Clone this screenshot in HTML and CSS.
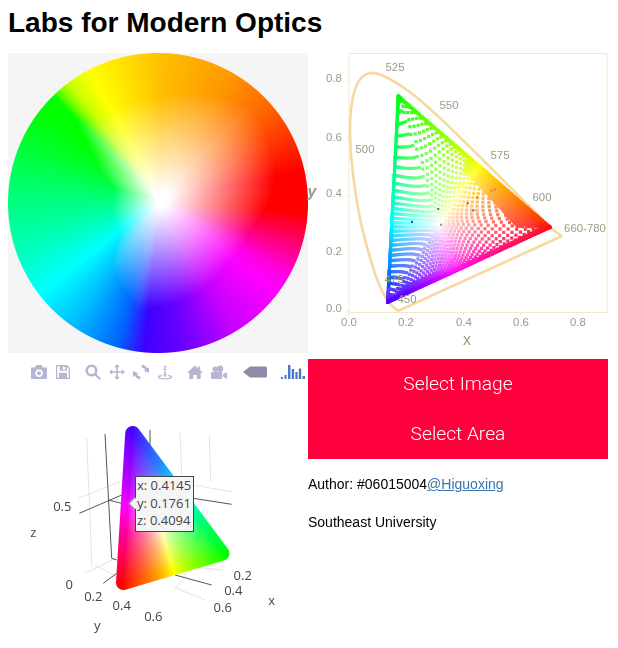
FILE: index.html
```html
<!DOCTYPE html>
<html lang="en">
<head>
<meta charset="utf-8">
<title>Labs for Modern Optics</title>
<link rel="stylesheet" href="styles.css">
</head>
<body>
<h1 class="title">Labs for Modern Optics</h1>
<main class="layout">
  <canvas id="wheel" class="wheel" width="300" height="300"></canvas>

  <svg class="chart" viewBox="0 0 300 300" width="300" height="300">
    <rect class="chart-frame" x="41" y="0.5" width="258" height="259"/>
    <path class="chart-ticks" d="M38 28.700h2M38 86.100h2M38 143.500h2M38 200.900h2M38 258.300h2M41 260v2M98.200 260v2M155.400 260v2M212.600 260v2M269.800 260v2"/>
    <path id="locus" class="chart-locus"/>
    <g id="dots"></g>
    <g class="chart-text">
      <text x="26" y="29">0.8</text>
      <text x="26" y="88">0.6</text>
      <text x="26" y="144">0.4</text>
      <text x="26" y="202">0.2</text>
      <text x="26" y="259">0.0</text>
      <text x="41" y="273">0.0</text>
      <text x="98" y="273">0.2</text>
      <text x="156" y="273">0.4</text>
      <text x="213" y="273">0.6</text>
      <text x="270" y="273">0.8</text>
      <text x="87" y="18">525</text>
      <text x="141" y="56">550</text>
      <text x="192" y="106">575</text>
      <text x="234" y="148">600</text>
      <text x="277" y="179">660-780</text>
      <text x="57" y="100">500</text>
      <text x="86" y="230">475</text>
      <text x="99" y="250">450</text>
    </g>
    <text class="chart-axis" x="159" y="292">x</text>
    <text class="chart-axis chart-axis-y" x="4" y="144">y</text>
  </svg>

  <section class="left-lower">
    <div class="modebar">
      <svg class="icon" viewBox="0 0 16 16"><path fill-rule="evenodd" d="M0 3.500h4L5.500 1h5L12 3.500h4V15H0zM8 5.500a3.700 3.700 0 1 0 0 7.400 3.700 3.700 0 0 0 0-7.400zM8 7.200a2 2 0 1 1 0 4 2 2 0 0 1 0-4z"/></svg>
      <svg class="icon" viewBox="0 0 16 16"><path fill-rule="evenodd" d="M1 1h11l3 3v11H1zM2.300 2.300v11.400h11.400V4.600L11.800 2.700V6.800H4.800V2.300zM7.800 2.700v3h2.300v-3zM4 8.800h8v4.900H4z"/></svg>
      <svg class="icon gap-wide" viewBox="0 0 16 16"><path fill-rule="evenodd" d="M6.500 0.500a6 6 0 0 1 4.900 9.400L16 14.500 14.500 16 9.900 11.400A6 6 0 1 1 6.500 0.500zM6.500 3a3.500 3.500 0 1 0 0 7 3.500 3.500 0 0 0 0-7z"/></svg>
      <svg class="icon" viewBox="0 0 16 16"><path d="M8 0l2.800 3.200H8.800v4h4V5.200L16 8l-3.200 2.800V8.800h-4v4h2L8 16l-2.800-3.200h2v-4h-4v2L0 8l3.200-2.800v2h4v-4h-2z"/></svg>
      <svg class="icon" viewBox="0 0 16 16"><path d="M9 .5A7 7 0 0 1 14.300 4.200L16 3v6l-5.500-2.400 1.700-1.100A4.800 4.800 0 0 0 8.500 3.500zM7 15.500A7 7 0 0 1 1.700 11.800L0 13V7l5.500 2.400-1.700 1.100A4.800 4.800 0 0 0 7.500 12.500z"/></svg>
      <svg class="icon" viewBox="0 0 16 16"><text class="icon-z" x="8" y="6">z</text><path d="M7.300 6.500h1.400v6H7.300zM5.800 10.500h4.400L8 13.300z"/><path class="icon-line" d="M4.500 11.500C2 12 1 12.800 1.500 13.700c1 1.500 12 1.500 13 0 .5-.9-.5-1.700-3-2.200"/></svg>
      <svg class="icon gap-wide" viewBox="0 0 16 16"><path d="M8 1.500l3 2.700V2.500h2.200v3.700L16 8.800h-2.300V15h-3.900v-4H6.200v4H2.300V8.800H0z"/></svg>
      <svg class="icon" viewBox="0 0 16 16"><path d="M0 8h11v7H0zM11.800 10.500L16 8v7l-4.200-2.500zM3.500 2.500a2.800 2.800 0 1 1 0 5.500 2.800 2.800 0 0 1 0-5.500zM9 1.500a3.200 3.200 0 1 1 0 6.400 3.200 3.200 0 0 1 0-6.400z"/></svg>
      <svg class="tag" viewBox="0 0 24 12"><path d="M0 6l7-5.500h16l1 1v9l-1 1H7z"/></svg>
      <svg class="bars" viewBox="0 0 24 16"><path d="M0 13h2v2H0zM3.500 11h2v4h-2zM7 1h2.400v14H7zM10.700 5h2.400v10h-2.400zM14.400 8h2.200v7h-2.200zM17.800 4.500h2.400V15h-2.400zM21.500 12H24v3h-2.500z"/></svg>
    </div>

    <div class="plot3d">
      <svg class="plot3d-axes" viewBox="0 0 300 258" width="300" height="258">
        <path class="grid-light" d="M78.700 49L84 178M70.300 109.300L112 92.700M77 184.300l31.700-15.600M87 176l21.700 11.700M172 42.700l1.700 43.300M201.300 46l1.400 46.700M185.300 96l38.400 6.700M167 198.700l30 12.300M167 201l15-23.300M182 177.700l33 3.300"/>
        <path class="grid-dark" d="M97 45l6.700 124.300M71.300 124.300L113.700 106M100.300 111l13.400 3.300M95.300 194.300l13.400-10M103.700 169.300l5 1.700M167 186l36.700 10M142 41v18.300M185.300 109.300l38.400 6"/>
        <g class="plot-text">
          <text x="54.300" y="122">0.5</text>
          <text x="25.300" y="148">z</text>
          <text x="61.300" y="200">0</text>
          <text x="85.300" y="212">0.2</text>
          <text x="113.700" y="221">0.4</text>
          <text x="145.300" y="232">0.6</text>
          <text x="89.300" y="241">y</text>
          <text x="234.700" y="191">0.2</text>
          <text x="225.300" y="206">0.4</text>
          <text x="214.700" y="223">0.6</text>
          <text x="263.700" y="216">x</text>
        </g>
      </svg>
      <canvas id="gamut" class="gamut" width="300" height="258"></canvas>
      <div class="tooltip">
        <span>x: 0.4145</span>
        <span>y: 0.1761</span>
        <span>z: 0.4094</span>
      </div>
    </div>
  </section>

  <section class="right-lower">
    <div class="action">Select Image</div>
    <div class="action">Select Area</div>
    <p class="note">Author: #06015004<a href="#">@Higuoxing</a></p>
    <p class="note">Southeast University</p>
  </section>
</main>
<script src="script.js"></script>
</body>
</html>
```

FILE: styles.css
```css
html, body { background: #fff; }
body {
  margin: 8px;
  font-family: "Liberation Sans", Arial, sans-serif;
  color: #000;
}
.title {
  margin: 0;
  height: 45px;
  font-size: 28px;
  line-height: 30px;
  font-weight: 700;
}
.layout {
  display: grid;
  grid-template-columns: 300px 300px;
  grid-template-rows: 300px auto;
  row-gap: 6px;
}
.wheel {
  display: block;
  background: #f5f5f5;
}
.chart {
  display: block;
  overflow: visible;
}
.chart-frame { fill: none; stroke: #f7e8cb; stroke-width: 1; }
.chart-ticks { fill: none; stroke: #e8e4d2; stroke-width: 1; }
.chart-locus { fill: none; stroke: #f6d9a2; stroke-width: 2.6; stroke-linejoin: round; }
.chart-text text {
  font-size: 11.4px;
  fill: #9b9b85;
  text-anchor: middle;
}
.chart-axis {
  font-size: 16px;
  fill: #9b9b85;
  text-anchor: middle;
}
.chart-axis-y { font-style: italic; font-weight: 700; }

.left-lower { display: flex; flex-direction: column; }
.modebar {
  display: flex;
  align-items: center;
  height: 18px;
  margin-top: 4px;
  padding-left: 23px;
  gap: 8px;
  fill: #b6b6d2;
}
.icon { width: 16px; height: 16px; flex: none; }
.gap-wide { margin-left: 6px; }
.icon-z { font-family: "Liberation Sans", Arial, sans-serif; font-size: 8px; font-weight: 700; text-anchor: middle; }
.icon-line { fill: none; stroke: #b6b6d2; stroke-width: 1.3; }
.tag { width: 24px; height: 12px; flex: none; margin-left: 8px; fill: #8d8da8; }
.bars { width: 24px; height: 16px; flex: none; margin-left: 6px; fill: #4a76c8; }

.plot3d {
  position: relative;
  width: 300px;
  height: 258px;
  margin-top: 8px;
}
.plot3d-axes { display: block; }
.grid-light { fill: none; stroke: #e3e3e3; stroke-width: 1; }
.grid-dark { fill: none; stroke: #555; stroke-width: 1; }
.plot-text text {
  font-family: "Open Sans", sans-serif;
  font-size: 13px;
  fill: #444;
  text-anchor: middle;
}
.gamut { position: absolute; left: 0; top: 0; }
.tooltip {
  position: absolute;
  left: 127px;
  top: 87px;
  width: 59px;
  height: 56px;
  box-sizing: border-box;
  padding: 0 0 0 1px;
  display: flex;
  flex-direction: column;
  background: #f5f5f5;
  border: 1px solid #444;
  font-family: "Open Sans", sans-serif;
  font-size: 13px;
  line-height: 17.500px;
  color: #444;
}
.tooltip::before {
  content: "";
  position: absolute;
  left: -6px;
  top: 22px;
  width: 9px;
  height: 9px;
  box-sizing: border-box;
  background: #f5f5f5;
  border-left: 1px solid #777;
  border-bottom: 1px solid #777;
  transform: rotate(45deg);
}
.tooltip span { position: relative; }

.right-lower { display: flex; flex-direction: column; }
.action {
  height: 50px;
  line-height: 50px;
  background: #ff003c;
  color: #fff;
  text-align: center;
  font-family: Roboto, "Liberation Sans", sans-serif;
  font-weight: 300;
  font-size: 19.200px;
}
.note {
  margin: 18px 0 0;
  font-size: 14px;
  line-height: 15px;
  height: 15px;
}
.note + .note { margin-top: 23px; }
.note a { color: #3a72ae; }
```

FILE: script.js
```js
function lerpTable(table, a) {
  a = ((a % 360) + 360) % 360;
  for (var i = 0; i < table.length - 1; i++) {
    var p = table[i], q = table[i + 1];
    if (a >= p[0] && a <= q[0]) {
      var t = (a - p[0]) / (q[0] - p[0]);
      return p.slice(1).map(function (v, k) { return v + (q[k + 1] - v) * t; });
    }
  }
  return table[0].slice(1);
}

var WHEEL_HUE = [
  [0,255,192,0],[30,255,150,0],[50,255,100,0],[70,255,30,0],[78,255,0,0],[95,255,0,0],
  [105,255,0,90],[120,255,0,220],[128,255,0,255],[150,200,0,255],[170,110,0,255],
  [186,60,0,255],[196,0,100,255],[215,0,190,255],[232,0,255,255],
  [255,0,255,170],[275,0,255,110],[295,0,255,40],[308,0,255,0],[314,0,255,0],
  [318,120,255,0],[322,200,255,0],[331,255,255,0],[345,255,225,0],[360,255,192,0]
];
var WHEEL_REACH = [
  [0,103],[45,130],[75,120],[90,110],[110,95],[135,94],[170,103],[191,112],[200,100],
  [215,83],[230,52],[270,47],[286,48],[302,76],[309,95],[314,120],[320,105],[331,103],[360,103]
];

function wheelColor(x, y) {
  var dx = x - 152, dy = y - 147;
  var r = Math.hypot(dx, dy);
  var ang = Math.atan2(dx, -dy) * 180 / Math.PI;
  var c = lerpTable(WHEEL_HUE, ang);
  var s = Math.min(1, r / lerpTable(WHEEL_REACH, ang)[0]);
  s = Math.max(0, s * 1.08 - 0.08);
  return [255 + (c[0] - 255) * s, 255 + (c[1] - 255) * s, 255 + (c[2] - 255) * s];
}

function drawWheel() {
  var ctx = document.getElementById('wheel').getContext('2d');
  var img = ctx.createImageData(300, 300);
  for (var y = 0; y < 300; y++) {
    for (var x = 0; x < 300; x++) {
      var edge = Math.hypot(x + 0.5 - 150, y + 0.5 - 150);
      var alpha = Math.max(0, Math.min(1, 150.5 - edge));
      var c = wheelColor(x + 0.5, y + 0.5);
      var i = (y * 300 + x) * 4;
      img.data[i] = c[0];
      img.data[i + 1] = c[1];
      img.data[i + 2] = c[2];
      img.data[i + 3] = alpha * 255;
    }
  }
  ctx.putImageData(img, 0, 0);
}

function smoothPath(pts) {
  var d = 'M' + pts[0][0].toFixed(1) + ' ' + pts[0][1].toFixed(1);
  for (var i = 0; i < pts.length - 1; i++) {
    var p0 = pts[Math.max(0, i - 1)], p1 = pts[i], p2 = pts[i + 1], p3 = pts[Math.min(pts.length - 1, i + 2)];
    d += 'C' + [p1[0] + (p2[0] - p0[0]) / 6, p1[1] + (p2[1] - p0[1]) / 6,
                p2[0] - (p3[0] - p1[0]) / 6, p2[1] - (p3[1] - p1[1]) / 6,
                p2[0], p2[1]].map(function (v) { return v.toFixed(1); }).join(' ');
  }
  return d;
}

function hsv(h, s) {
  var k = function (n) {
    var t = (n + h / 60) % 6;
    return 255 * (1 - s * Math.max(0, Math.min(t, 4 - t, 1)));
  };
  return [k(5), k(3), k(1)];
}

function drawChart() {
  var locus = [
    [.172,.005],[.1566,.0177],[.144,.0297],[.1241,.0578],[.0913,.1327],[.0454,.295],
    [.0235,.4127],[.0082,.5384],[.0039,.6548],[.0139,.7502],[.0389,.812],[.0743,.8338],[.1142,.8262],
    [.1547,.8059],[.1929,.7816],[.2296,.7543],[.2658,.7243],[.3016,.6923],[.3731,.6245],[.4441,.5547],
    [.5125,.4866],[.5752,.4242],[.627,.3725],[.6658,.334],[.7006,.2993],[.7427,.2653]
  ];
  var X = function (x) { return 41 + 286 * x; };
  var Y = function (y) { return 259.3 - 287 * y; };
  var pts = locus.map(function (p) { return [X(p[0]), Y(p[1])]; });
  document.getElementById('locus').setAttribute('d', smoothPath(pts) + 'Z');

  var prim = [[.703,.296,1],[.172,.754,.9],[.135,.035,1.45]];
  var parts = [];
  function add(c, size) {
    var sx = 0, sy = 0, sw = 0;
    c.forEach(function (v, k) {
      var w = Math.pow(v / 255, 1.7) * prim[k][2];
      sx += w * prim[k][0]; sy += w * prim[k][1]; sw += w;
    });
    var px = X(sx / sw), py = Y(sy / sw);
    var shown = [Math.max(c[0], c[2] > 250 && c[1] < 70 ? 95 : 0), c[1], c[2]];
    parts.push('<rect x="' + (px - size / 2).toFixed(1) + '" y="' + (py - size / 2).toFixed(1) +
      '" width="' + size + '" height="' + size + '" fill="rgb(' + shown.map(Math.round).join(',') + ')"/>');
  }
  var step = 0.053;
  for (var u = -1; u <= 1; u += step) {
    for (var v = -1; v <= 1; v += step) {
      var s = Math.hypot(u, v);
      if (s <= 1) add(hsv((Math.atan2(v, u) * 180 / Math.PI + 360) % 360, s), 3.2);
    }
  }
  for (var h = 0; h < 360; h += 1) {
    var inner = h < 70 ? 0.7 : h >= 250 && h < 290 ? 0.78 : h >= 290 ? 0.88 : 0.97;
    for (var sat = 1; sat >= inner; sat -= 0.03) add(hsv(h, sat), 3);
  }
  [[.312,.36,'#1a9a30'],[.322,.305,'#40d040'],[.22,.315,'#2040c0'],[.415,.38,'#c05020'],
   [.447,.4,'#e07020'],[.435,.355,'#c04030'],[.498,.424,'#e08030'],[.51,.428,'#e08030']].forEach(function (d) {
    parts.push('<rect x="' + (X(d[0]) - 1) + '" y="' + (Y(d[1]) - 1) + '" width="2" height="2" fill="' + d[2] + '"/>');
  });
  document.getElementById('dots').innerHTML = parts.join('');
}

function drawGamut() {
  var A = [124.7, 44.5], B = [213.9, 164.3], C = [115.5, 193.5], R = 7.5;
  var ctx = document.getElementById('gamut').getContext('2d');
  var img = ctx.createImageData(300, 258);
  var det = (B[1] - C[1]) * (A[0] - C[0]) + (C[0] - B[0]) * (A[1] - C[1]);
  function bary(x, y) {
    var a = ((B[1] - C[1]) * (x - C[0]) + (C[0] - B[0]) * (y - C[1])) / det;
    var b = ((C[1] - A[1]) * (x - C[0]) + (A[0] - C[0]) * (y - C[1])) / det;
    return [a, b, 1 - a - b];
  }
  function segDist(x, y, P, Q) {
    var vx = Q[0] - P[0], vy = Q[1] - P[1];
    var t = Math.max(0, Math.min(1, ((x - P[0]) * vx + (y - P[1]) * vy) / (vx * vx + vy * vy)));
    return Math.hypot(x - P[0] - vx * t, y - P[1] - vy * t);
  }
  for (var y = 0; y < 258; y++) {
    for (var x = 0; x < 300; x++) {
      var px = x + 0.5, py = y + 0.5;
      var w = bary(px, py);
      var inside = w[0] >= 0 && w[1] >= 0 && w[2] >= 0;
      var d = inside ? 0 : Math.min(segDist(px, py, A, B), segDist(px, py, B, C), segDist(px, py, C, A));
      var alpha = Math.max(0, Math.min(1, R + 0.5 - d));
      if (!alpha) continue;
      var blue = Math.max(0, w[0]), green = Math.max(0, w[1]), red = Math.max(0, w[2]);
      var m = Math.max(red, green, blue);
      var i = (y * 300 + x) * 4;
      var g = 0.7;
      var rv = Math.pow(red / m, g), gv = Math.pow(green / m, g), bv = Math.pow(blue / m, g);
      rv = rv + (1 - rv) * 0.3 * bv * (1 - gv);
      img.data[i] = 255 * rv;
      img.data[i + 1] = 255 * gv;
      img.data[i + 2] = 255 * bv;
      img.data[i + 3] = alpha * 255;
    }
  }
  ctx.putImageData(img, 0, 0);
}

drawWheel();
drawChart();
drawGamut();
```
